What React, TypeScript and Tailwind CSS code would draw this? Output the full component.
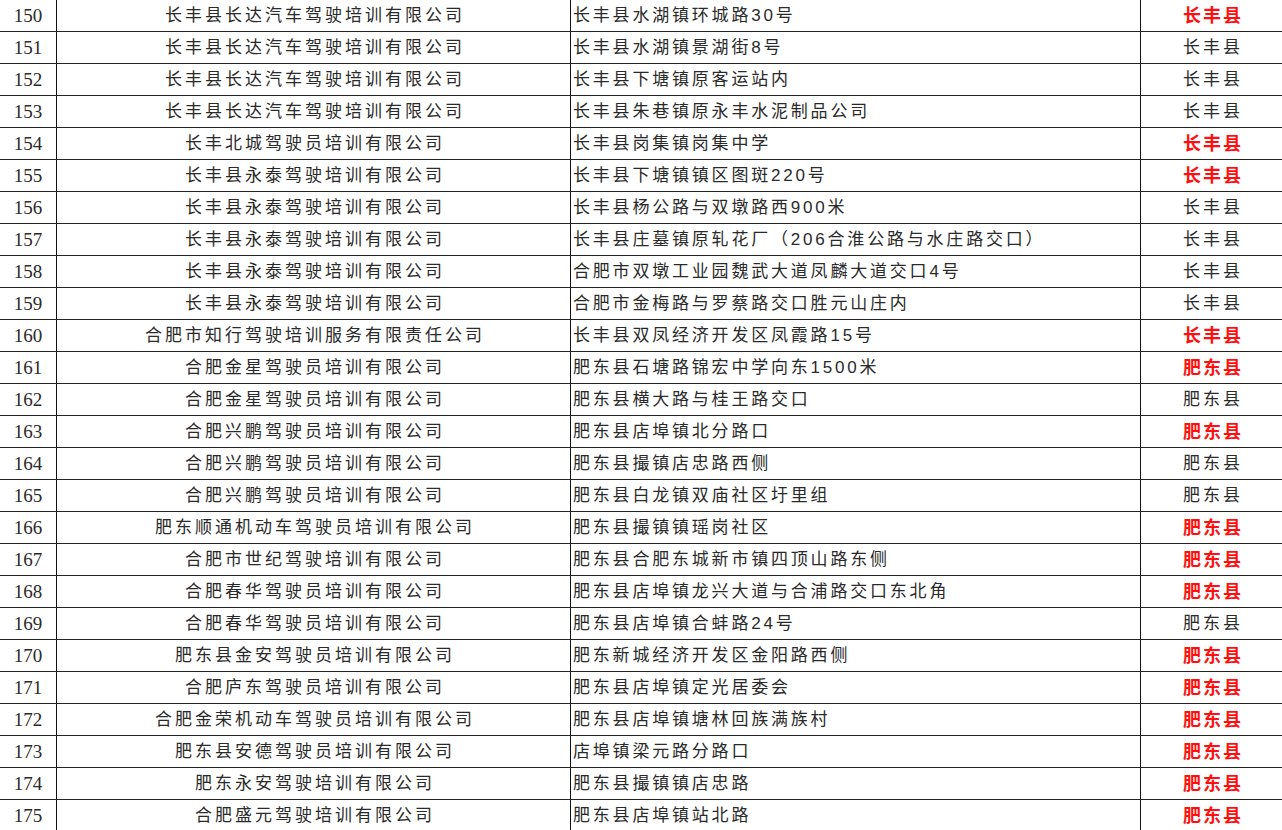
const rows: [number, string, string, string, boolean][] = [
  [150, "长丰县长达汽车驾驶培训有限公司", "长丰县水湖镇环城路30号", "长丰县", true],
  [151, "长丰县长达汽车驾驶培训有限公司", "长丰县水湖镇景湖街8号", "长丰县", false],
  [152, "长丰县长达汽车驾驶培训有限公司", "长丰县下塘镇原客运站内", "长丰县", false],
  [153, "长丰县长达汽车驾驶培训有限公司", "长丰县朱巷镇原永丰水泥制品公司", "长丰县", false],
  [154, "长丰北城驾驶员培训有限公司", "长丰县岗集镇岗集中学", "长丰县", true],
  [155, "长丰县永泰驾驶培训有限公司", "长丰县下塘镇镇区图斑220号", "长丰县", true],
  [156, "长丰县永泰驾驶培训有限公司", "长丰县杨公路与双墩路西900米", "长丰县", false],
  [157, "长丰县永泰驾驶培训有限公司", "长丰县庄墓镇原轧花厂（206合淮公路与水庄路交口）", "长丰县", false],
  [158, "长丰县永泰驾驶培训有限公司", "合肥市双墩工业园魏武大道凤麟大道交口4号", "长丰县", false],
  [159, "长丰县永泰驾驶培训有限公司", "合肥市金梅路与罗蔡路交口胜元山庄内", "长丰县", false],
  [160, "合肥市知行驾驶培训服务有限责任公司", "长丰县双凤经济开发区凤霞路15号", "长丰县", true],
  [161, "合肥金星驾驶员培训有限公司", "肥东县石塘路锦宏中学向东1500米", "肥东县", true],
  [162, "合肥金星驾驶员培训有限公司", "肥东县横大路与桂王路交口", "肥东县", false],
  [163, "合肥兴鹏驾驶员培训有限公司", "肥东县店埠镇北分路口", "肥东县", true],
  [164, "合肥兴鹏驾驶员培训有限公司", "肥东县撮镇店忠路西侧", "肥东县", false],
  [165, "合肥兴鹏驾驶员培训有限公司", "肥东县白龙镇双庙社区圩里组", "肥东县", false],
  [166, "肥东顺通机动车驾驶员培训有限公司", "肥东县撮镇镇瑶岗社区", "肥东县", true],
  [167, "合肥市世纪驾驶培训有限公司", "肥东县合肥东城新市镇四顶山路东侧", "肥东县", true],
  [168, "合肥春华驾驶员培训有限公司", "肥东县店埠镇龙兴大道与合浦路交口东北角", "肥东县", true],
  [169, "合肥春华驾驶员培训有限公司", "肥东县店埠镇合蚌路24号", "肥东县", false],
  [170, "肥东县金安驾驶员培训有限公司", "肥东新城经济开发区金阳路西侧", "肥东县", true],
  [171, "合肥庐东驾驶员培训有限公司", "肥东县店埠镇定光居委会", "肥东县", true],
  [172, "合肥金荣机动车驾驶员培训有限公司", "肥东县店埠镇塘林回族满族村", "肥东县", true],
  [173, "肥东县安德驾驶员培训有限公司", "店埠镇梁元路分路口", "肥东县", true],
  [174, "肥东永安驾驶培训有限公司", "肥东县撮镇镇店忠路", "肥东县", true],
  [175, "合肥盛元驾驶培训有限公司", "肥东县店埠镇站北路", "肥东县", true],
]

export default function App() {
  return (
    <div className="w-[1282px] h-[830px] overflow-hidden bg-white text-[#2a2a2a] font-['Liberation_Sans','Noto_Sans_CJK_SC',sans-serif]">
      {rows.map(([no, company, addr, county, red]) => (
        <div key={no} className="flex h-[32px] border-b border-[#222]">
          <div className="w-[57px] shrink-0 border-r border-[#111] flex items-center justify-center pt-[2px] font-['Liberation_Serif','Noto_Sans_CJK_SC',serif] text-[19px]">
            {no}
          </div>
          <div className="w-[514px] shrink-0 border-r border-[#111] flex items-center justify-center pt-[1px] pl-[3px] text-[17px] tracking-[3px]">
            {company}
          </div>
          <div className="w-[570px] shrink-0 border-r border-[#111] flex items-center pt-[1px] pl-[2px] text-[17px] tracking-[2.8px] whitespace-nowrap">
            {addr}
          </div>
          <div
            className={
              red
                ? "flex-1 flex items-center justify-center pt-[1px] pl-[3px] text-[18px] tracking-[2px] font-bold text-[#ff1010]"
                : "flex-1 flex items-center justify-center pt-[1px] pl-[3px] text-[17px] tracking-[3px]"
            }
          >
            {county}
          </div>
        </div>
      ))}
    </div>
  )
}
